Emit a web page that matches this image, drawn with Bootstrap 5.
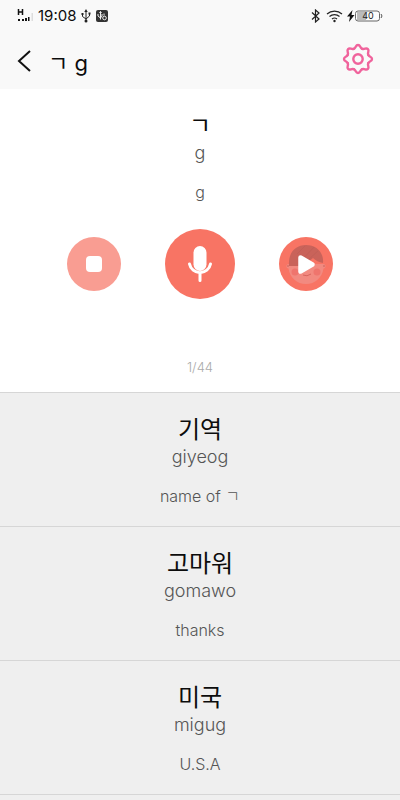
<!DOCTYPE html>
<html lang="en">
<head>
<meta charset="utf-8">
<meta name="viewport" content="width=device-width, initial-scale=1">
<title>ㄱ g</title>
<link href="https://cdn.jsdelivr.net/npm/bootstrap@5.3.0/dist/css/bootstrap.min.css" rel="stylesheet">
<style>
body { font-family: Inter, "Noto Sans CJK KR", sans-serif; background: #efefef; color: #0c0c0c; }
svg { display: block; flex: none; }
.top-area { background: #f9f9f9; }
.status-bar { height: 32px; padding: 0 17px; font-size: 15px; line-height: 20px; }
.app-bar { height: 57px; padding: 0 25px 0 16px; }
.app-title { font-size: 22px; line-height: 28px; }
.icon-btn { border: 0; padding: 0; background: none; border-radius: 50%; }
.word { font-size: 24px; line-height: 28px; }
.roman { font-size: 18px; line-height: 26px; font-weight: 300; color: #555; }
.meaning { font-size: 16px; line-height: 22px; margin-top: 15px; font-weight: 300; color: #555; }
.entry { padding: 23px 16px 19px; border-bottom: 1px solid #d6d6d6; }
.practice { background: #fff; }
.controls { gap: 44px; margin-top: 26px; }
.counter { font-size: 13px; line-height: 18px; margin-top: 59px; margin-bottom: -3px; font-weight: 300; color: #aaa; }
</style>
<script src="https://cdn.jsdelivr.net/npm/bootstrap@5.3.0/dist/js/bootstrap.bundle.min.js"></script>
</head>
<body>
<header class="top-area">
  <div class="status-bar d-flex align-items-center justify-content-between">
    <div class="d-flex align-items-center gap-1">
      <svg width="17" height="16" viewBox="0 0 17 16" aria-hidden="true">
        <path d="M1.500 1v6M5.500 1v6M1.500 4h4" fill="none" stroke="#111" stroke-width="1.500"/>
        <path d="M1 11h2v2H1zM5 11h2v2H5zM8 10h2v3H8zM11 9h1.500v4H11z" fill="#111"/>
        <path d="M14.500 5h1.500v8h-1.500z" fill="#ddd"/>
      </svg>
      <span>19:08</span>
      <svg width="12" height="14" viewBox="0 0 12 14" fill="none" stroke="#222" aria-hidden="true">
        <path d="M6 2v10M2.500 5v2.500L6 10l3.500-3V5"/>
        <path d="M6 0 4.300 3h3.400zM1.500 4h2v2h-2zM8.500 3.500h2v2h-2z" fill="#222" stroke="none"/>
        <circle cx="6" cy="12" r="1.500" fill="#222" stroke="none"/>
      </svg>
      <svg width="12" height="12" viewBox="0 0 12 12" fill="none" aria-hidden="true">
        <rect width="12" height="12" rx="2" fill="#333"/>
        <path d="M4.500 1.500v8M2 4v2l2.500 2L6 6V4M3.500 3l1-1.500 1 1.500" stroke="#eee"/>
        <circle cx="8.500" cy="8" r="1.800" stroke="#eee"/><path d="M8 3.500v2" stroke="#eee"/>
      </svg>
    </div>
    <div class="d-flex align-items-center">
      <svg width="12" height="14" viewBox="0 0 12 14" fill="none" stroke="#222" stroke-width="1.200" aria-hidden="true">
        <path d="m2 3.500 7 6.500-3.500 3V1L9 4l-7 6.500"/>
      </svg>
      <svg class="ms-1" width="17" height="14" viewBox="0 0 17 14" fill="none" stroke="#222" stroke-width="1.200" aria-hidden="true">
        <path d="M1 5a11 11 0 0 1 15 0M3.500 7.500a7.500 7.500 0 0 1 10 0M6 10a4 4 0 0 1 5 0"/>
        <circle cx="8.500" cy="12" r="1.200" fill="#222" stroke="none"/>
      </svg>
      <svg class="ms-1" width="36" height="12" viewBox="0 0 36 12" aria-hidden="true">
        <path d="M5.500 0 0 6.500h3L2 12l5.500-7H4.500z" fill="#111"/>
        <rect x="8.500" y="1" width="24" height="10" rx="2.500" fill="#fcfcfc" stroke="#666"/>
        <path d="M10 2h9v8h-9z" fill="#bbb"/>
        <path d="M34 4q2 2 0 4" fill="none" stroke="#555"/>
        <text x="21" y="9" text-anchor="middle" font-size="9" fill="#222">40</text>
      </svg>
    </div>
  </div>
  <nav class="app-bar d-flex align-items-center" aria-label="Lesson">
    <button class="icon-btn" type="button" aria-label="Back">
      <svg width="16" height="24" viewBox="0 0 16 24" fill="none" stroke="#111" stroke-width="2"><path d="M14 2 3 12l11 10"/></svg>
    </button>
    <h1 class="app-title fw-normal mb-0 ms-3 me-auto pt-1">ㄱ g</h1>
    <button class="icon-btn pb-1" type="button" aria-label="Settings">
      <svg width="34" height="34" viewBox="-17 -17 34 34" fill="none" stroke="#f0639c" stroke-width="2.400" stroke-linecap="round">
        <defs><path id="lobe" d="M-4.200-10.200C-1.800-11.200-2.600-14 0-14S1.800-11.200 4.200-10.200"/></defs>
        <use href="#lobe"/><use href="#lobe" transform="rotate(45)"/><use href="#lobe" transform="rotate(90)"/><use href="#lobe" transform="rotate(135)"/>
        <use href="#lobe" transform="rotate(180)"/><use href="#lobe" transform="rotate(225)"/><use href="#lobe" transform="rotate(270)"/><use href="#lobe" transform="rotate(315)"/>
        <circle r="4.700"/>
      </svg>
    </button>
  </nav>
</header>
<main class="text-center">
  <section class="practice entry">
    <div class="word">ㄱ</div>
    <div class="roman">g</div>
    <div class="meaning">g</div>
    <div class="controls d-flex align-items-center justify-content-center">
      <button class="icon-btn" type="button" aria-label="Stop">
        <svg width="54" height="54" viewBox="0 0 54 54"><circle cx="27" cy="27" r="27" fill="#f99d92"/><rect x="19" y="19" width="16" height="16" rx="4" fill="#fff"/></svg>
      </button>
      <button class="icon-btn" type="button" aria-label="Record">
        <svg width="70" height="70" viewBox="0 0 70 70"><circle cx="35" cy="35" r="35" fill="#f87464"/><rect x="28.500" y="17" width="13" height="25" rx="6.500" fill="#fff"/><path d="M24.500 35a10.700 10.700 0 0 0 21 0M35 45v6.500" fill="none" stroke="#fff" stroke-width="3" stroke-linecap="round"/></svg>
      </button>
      <button class="icon-btn" type="button" aria-label="Play">
        <svg width="54" height="54" viewBox="0 0 54 54">
          <circle cx="27" cy="27" r="27" fill="#f87464"/>
          <path d="M10 27h34c3-.5 3.500 4 .5 4.500C43 41 36 47 27 47S11 41 9.500 31.500C6.500 31 7 26.500 10 27z" fill="#f28a80"/>
          <path d="M10 29C9 16 16 8 27 8s18 8 17 18q-6-1-10-5-6 6-15 8z" fill="#c9635a"/>
          <path d="m18 17 8-8m-4 15L35 10m-6 13 10-9" stroke="#bd5d55" stroke-width="1" opacity=".5"/>
          <circle cx="16" cy="35" r="3.500" fill="#ef756d"/><circle cx="38" cy="35" r="3.500" fill="#ef756d"/>
          <path d="M24 38q4 2 8-1" fill="none" stroke="#d8665e"/>
          <path d="M9 28v2M45 28v2" stroke="#c9635a"/>
          <path d="m21.500 20.500 12 7-12 7z" fill="#fff" stroke="#fff" stroke-width="4.500" stroke-linejoin="round"/>
        </svg>
      </button>
    </div>
    <div class="counter">1/44</div>
  </section>
  <section class="entry"><div class="word">기역</div><div class="roman">giyeog</div><div class="meaning">name of ㄱ</div></section>
  <section class="entry"><div class="word">고마워</div><div class="roman">gomawo</div><div class="meaning">thanks</div></section>
  <section class="entry"><div class="word">미국</div><div class="roman">migug</div><div class="meaning">U.S.A</div></section>
</main>
</body>
</html>
